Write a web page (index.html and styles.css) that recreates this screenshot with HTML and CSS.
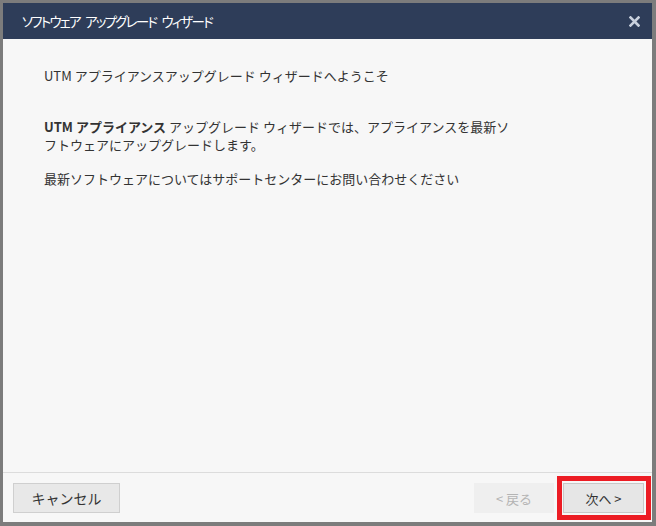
FILE: index.html
```html
<!DOCTYPE html>
<html lang="ja">
<head>
  <meta charset="UTF-8" />
  <title>ソフトウェア アップグレード ウィザード</title>
  <link rel="stylesheet" href="styles.css">
</head>
<body>

<div class="dialog">
  <header class="dialog-header">
    <h1>ソフトウェア アップグレード ウィザード</h1>
    <button class="close-button" aria-label="閉じる">
      <svg width="11" height="11" viewBox="0 0 11 11">
        <path d="M1.5 1.5L9.5 9.5M9.5 1.5L1.5 9.5" stroke="currentColor" stroke-width="2.6" stroke-linecap="square"/>
      </svg>
    </button>
  </header>

  <div class="dialog-body">
    <p class="welcome">UTM アプライアンスアップグレード ウィザードへようこそ</p>
    <p><strong>UTM アプライアンス</strong> アップグレード ウィザードでは、アプライアンスを最新ソ<br>フトウェアにアップグレードします。</p>
    <p>最新ソフトウェアについてはサポートセンターにお問い合わせください</p>
  </div>

  <footer class="dialog-footer">
    <button class="btn cancel">キャンセル</button>
    <div class="nav">
      <button class="btn back" disabled>&lt; 戻る</button>
      <div class="next-wrap">
        <button class="btn next">次へ &gt;</button>
        <span class="highlight"></span>
      </div>
    </div>
  </footer>
</div>

</body>
</html>
```

FILE: styles.css
```css
:root {
  --header: #2e3d59;
  --body-bg: #f7f7f7;
  --text: #333;
  --frame: #7c7c7c;
}

body {
  margin: 0;
  background: var(--frame);
  font-family: "Noto Sans CJK JP", "Noto Sans", sans-serif;
  color: var(--text);
}

.dialog {
  margin: 3px 4px 4px 3px;
  height: 519px;
  display: flex;
  flex-direction: column;
  background: var(--body-bg);
}

.dialog-header {
  height: 36px;
  flex-shrink: 0;
  background: var(--header);
  display: flex;
  align-items: center;
  justify-content: space-between;
  padding: 0 12px 0 19px;
}

.dialog-header h1 {
  margin: 0;
  font-size: 13.5px;
  font-weight: normal;
  font-feature-settings: "palt";
  letter-spacing: -1.8px;
  word-spacing: 4px;
  color: #fff;
}

.close-button {
  background: none;
  border: none;
  padding: 0;
  color: #c9d1dd;
  display: flex;
  cursor: pointer;
}

.dialog-body {
  flex: 1;
  padding: 28px 20px 0 41px;
  font-size: 13px;
  line-height: 18px;
}

.dialog-body p {
  margin: 0 0 16px;
}

.dialog-body p.welcome {
  margin-bottom: 33px;
}

.dialog-body strong {
  font-weight: bold;
}

.dialog-footer {
  border-top: 1px solid #dcdcdc;
  padding: 10px 8px 9px 10px;
  display: flex;
  justify-content: space-between;
  align-items: center;
}

.nav {
  display: flex;
  gap: 9px;
}

.btn {
  height: 30px;
  font-family: inherit;
  font-size: 13px;
  border: 1px solid #cfcfcf;
  background: #e8e8e8;
  color: #333;
  padding: 0;
}

.cancel { width: 107px; font-size: 14px; }

.back {
  width: 80px;
  background: #efefef;
  border-color: #efefef;
  color: #b4b4b4;
}

.next { width: 81px; background: #e6e6e6; border-color: #c8c8c8; }

.next-wrap {
  position: relative;
  display: flex;
}

.highlight {
  position: absolute;
  top: -7px;
  left: -6px;
  right: -7px;
  bottom: -7px;
  border: 5px solid #ec1c24;
  pointer-events: none;
}
```
